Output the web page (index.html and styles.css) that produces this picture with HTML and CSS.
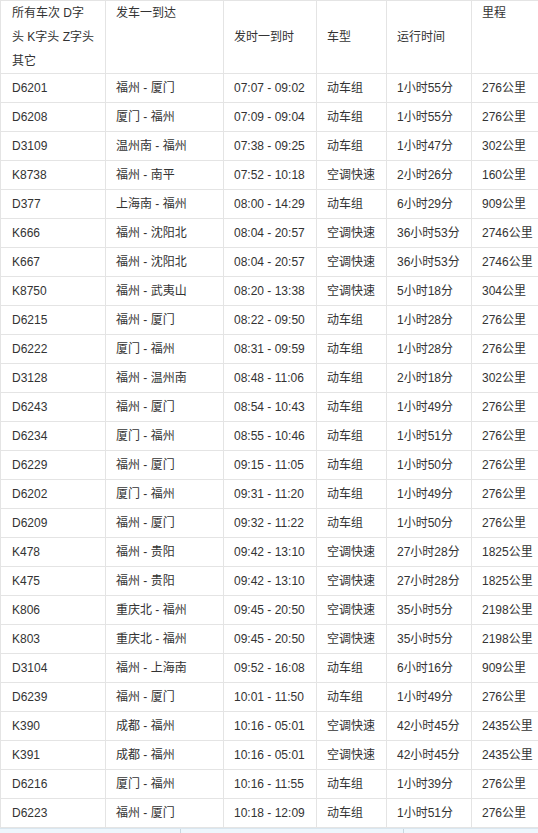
FILE: index.html
```html
<!DOCTYPE html>
<html lang="zh-CN">
<head>
<meta charset="utf-8">
<title>福州火车时刻表</title>
<link rel="stylesheet" href="styles.css">
</head>
<body>
<div class="page">
<table class="timetable">
  <colgroup>
    <col class="c1"><col class="c2"><col class="c3"><col class="c4"><col class="c5"><col class="c6">
  </colgroup>
  <thead>
    <tr>
      <th class="top">所有车次 D字<br>头 K字头 Z字头<br>其它</th>
      <th class="top">发车一到达</th>
      <th class="mid">发时一到时</th>
      <th class="mid">车型</th>
      <th class="mid">运行时间</th>
      <th class="top">里程</th>
    </tr>
  </thead>
  <tbody>
    <tr><td>D6201</td><td>福州 - 厦门</td><td>07:07 - 09:02</td><td>动车组</td><td>1小时55分</td><td>276公里</td></tr>
    <tr><td>D6208</td><td>厦门 - 福州</td><td>07:09 - 09:04</td><td>动车组</td><td>1小时55分</td><td>276公里</td></tr>
    <tr><td>D3109</td><td>温州南 - 福州</td><td>07:38 - 09:25</td><td>动车组</td><td>1小时47分</td><td>302公里</td></tr>
    <tr><td>K8738</td><td>福州 - 南平</td><td>07:52 - 10:18</td><td>空调快速</td><td>2小时26分</td><td>160公里</td></tr>
    <tr><td>D377</td><td>上海南 - 福州</td><td>08:00 - 14:29</td><td>动车组</td><td>6小时29分</td><td>909公里</td></tr>
    <tr><td>K666</td><td>福州 - 沈阳北</td><td>08:04 - 20:57</td><td>空调快速</td><td>36小时53分</td><td>2746公里</td></tr>
    <tr><td>K667</td><td>福州 - 沈阳北</td><td>08:04 - 20:57</td><td>空调快速</td><td>36小时53分</td><td>2746公里</td></tr>
    <tr><td>K8750</td><td>福州 - 武夷山</td><td>08:20 - 13:38</td><td>空调快速</td><td>5小时18分</td><td>304公里</td></tr>
    <tr><td>D6215</td><td>福州 - 厦门</td><td>08:22 - 09:50</td><td>动车组</td><td>1小时28分</td><td>276公里</td></tr>
    <tr><td>D6222</td><td>厦门 - 福州</td><td>08:31 - 09:59</td><td>动车组</td><td>1小时28分</td><td>276公里</td></tr>
    <tr><td>D3128</td><td>福州 - 温州南</td><td>08:48 - 11:06</td><td>动车组</td><td>2小时18分</td><td>302公里</td></tr>
    <tr><td>D6243</td><td>福州 - 厦门</td><td>08:54 - 10:43</td><td>动车组</td><td>1小时49分</td><td>276公里</td></tr>
    <tr><td>D6234</td><td>厦门 - 福州</td><td>08:55 - 10:46</td><td>动车组</td><td>1小时51分</td><td>276公里</td></tr>
    <tr><td>D6229</td><td>福州 - 厦门</td><td>09:15 - 11:05</td><td>动车组</td><td>1小时50分</td><td>276公里</td></tr>
    <tr><td>D6202</td><td>厦门 - 福州</td><td>09:31 - 11:20</td><td>动车组</td><td>1小时49分</td><td>276公里</td></tr>
    <tr><td>D6209</td><td>福州 - 厦门</td><td>09:32 - 11:22</td><td>动车组</td><td>1小时50分</td><td>276公里</td></tr>
    <tr><td>K478</td><td>福州 - 贵阳</td><td>09:42 - 13:10</td><td>空调快速</td><td>27小时28分</td><td>1825公里</td></tr>
    <tr><td>K475</td><td>福州 - 贵阳</td><td>09:42 - 13:10</td><td>空调快速</td><td>27小时28分</td><td>1825公里</td></tr>
    <tr><td>K806</td><td>重庆北 - 福州</td><td>09:45 - 20:50</td><td>空调快速</td><td>35小时5分</td><td>2198公里</td></tr>
    <tr><td>K803</td><td>重庆北 - 福州</td><td>09:45 - 20:50</td><td>空调快速</td><td>35小时5分</td><td>2198公里</td></tr>
    <tr><td>D3104</td><td>福州 - 上海南</td><td>09:52 - 16:08</td><td>动车组</td><td>6小时16分</td><td>909公里</td></tr>
    <tr><td>D6239</td><td>福州 - 厦门</td><td>10:01 - 11:50</td><td>动车组</td><td>1小时49分</td><td>276公里</td></tr>
    <tr><td>K390</td><td>成都 - 福州</td><td>10:16 - 05:01</td><td>空调快速</td><td>42小时45分</td><td>2435公里</td></tr>
    <tr><td>K391</td><td>成都 - 福州</td><td>10:16 - 05:01</td><td>空调快速</td><td>42小时45分</td><td>2435公里</td></tr>
    <tr><td>D6216</td><td>厦门 - 福州</td><td>10:16 - 11:55</td><td>动车组</td><td>1小时39分</td><td>276公里</td></tr>
    <tr><td>D6223</td><td>福州 - 厦门</td><td>10:18 - 12:09</td><td>动车组</td><td>1小时51分</td><td>276公里</td></tr>
  </tbody>
</table>
<div class="footer-bar">
  <div class="seg s1"></div>
  <div class="seg s2"></div>
  <div class="seg s3"></div>
</div>
</div>
</body>
</html>
```

FILE: styles.css
```css
html, body {
  margin: 0;
  padding: 0;
  background: #ffffff;
}

.page {
  width: 538px;
  overflow: hidden;
}

.timetable {
  border-collapse: collapse;
  table-layout: fixed;
  width: 580px;
  font-family: "Liberation Sans", "Noto Sans CJK SC", sans-serif;
  font-size: 12px;
  color: #333333;
}

.c1 { width: 105px; }
.c2 { width: 118px; }
.c3 { width: 93px; }
.c4 { width: 70px; }
.c5 { width: 85px; }
.c6 { width: 109px; }

.timetable th,
.timetable td {
  border: 1px solid #e4e4e4;
  padding: 0 0 0 10px;
  text-align: left;
  font-weight: normal;
  white-space: nowrap;
}

.timetable th:first-child,
.timetable td:first-child {
  padding-left: 11px;
}

.timetable th {
  height: 71px;
  line-height: 24px;
  padding-top: 0;
}

.timetable th.top {
  vertical-align: top;
  padding-top: 0;
}

.timetable th.mid {
  vertical-align: middle;
}

.timetable td {
  height: 28px;
  line-height: 28px;
  vertical-align: middle;
}

.footer-bar {
  display: flex;
  height: 8px;
  background: #eef6fc;
  border-top: 1px solid #d9e6ef;
}

.footer-bar .seg {
  height: 100%;
}

.footer-bar .s1 {
  width: 180px;
  border-right: 1px solid #c9d6df;
}

.footer-bar .s2 {
  width: 222px;
  border-right: 1px solid #c9d6df;
}

.footer-bar .s3 {
  flex: 1;
}
```
